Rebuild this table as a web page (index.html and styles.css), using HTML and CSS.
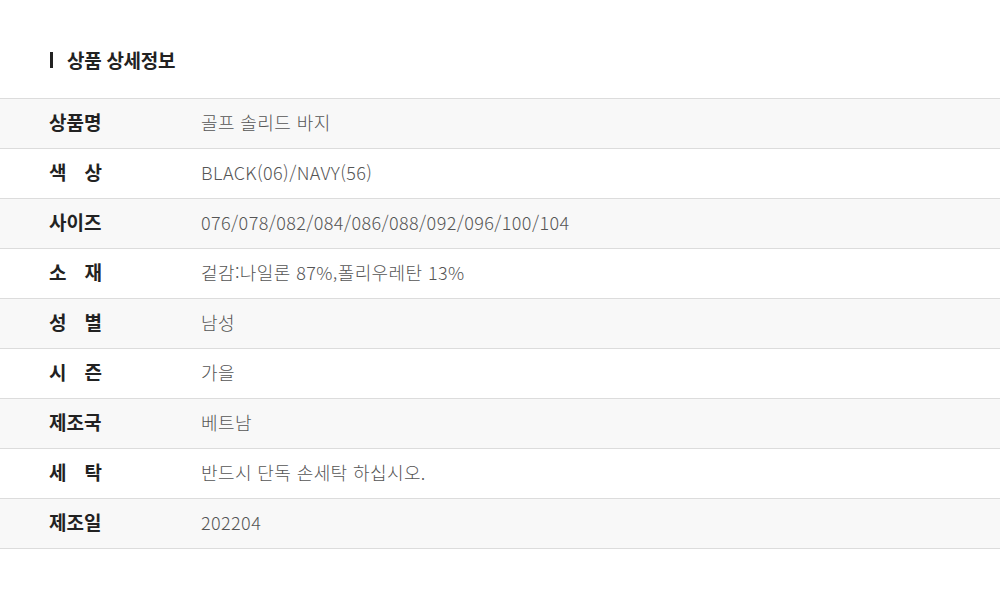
FILE: index.html
```html
<!DOCTYPE html>
<html lang="ko">
<head>
<meta charset="utf-8">
<link rel="stylesheet" href="styles.css">
</head>
<body>
<div class="page">
  <h2 class="title">상품 상세정보</h2>
  <div class="table">
    <div class="row"><div class="label">상품명</div><div class="value">골프 솔리드 바지</div></div>
    <div class="row"><div class="label">색 상</div><div class="value">BLACK(06)/NAVY(56)</div></div>
    <div class="row"><div class="label">사이즈</div><div class="value">076/078/082/084/086/088/092/096/100/104</div></div>
    <div class="row"><div class="label">소 재</div><div class="value">겉감:나일론 87%,폴리우레탄 13%</div></div>
    <div class="row"><div class="label">성 별</div><div class="value">남성</div></div>
    <div class="row"><div class="label">시 즌</div><div class="value">가을</div></div>
    <div class="row"><div class="label">제조국</div><div class="value">베트남</div></div>
    <div class="row"><div class="label">세 탁</div><div class="value">반드시 단독 손세탁 하십시오.</div></div>
    <div class="row"><div class="label">제조일</div><div class="value">202204</div></div>
  </div>
</div>
</body>
</html>
```
FILE: styles.css
```css
* { box-sizing: border-box; }
html, body { margin: 0; padding: 0; background: #fff; }
body {
  font-family: "Noto Sans CJK KR", "Noto Sans", sans-serif;
  color: #222;
}
.page { padding-top: 52px; }
.title {
  margin: 0 0 0 50px;
  padding-left: 14px;
  border-left: 3px solid #222;
  font-size: 19px;
  font-weight: 700;
  height: 16px;
  line-height: 16px;
  display: flex;
  align-items: center;
  letter-spacing: -0.3px;
}
.table {
  margin-top: 30px;
  border-top: 1px solid #dcdcdc;
}
.row {
  display: flex;
  align-items: center;
  height: 50px;
  padding-bottom: 4px;
  border-bottom: 1px solid #dcdcdc;
}
.row:nth-child(odd) { background: #f8f8f8; }
.label {
  width: 53px;
  margin-left: 49px;
  font-size: 19px;
  font-weight: 700;
  color: #222;
  text-align: justify;
  text-align-last: justify;
}
.value {
  margin-left: 99px;
  font-size: 18px;
  font-weight: 300;
  color: #555;
  letter-spacing: 0.4px;
}
```
